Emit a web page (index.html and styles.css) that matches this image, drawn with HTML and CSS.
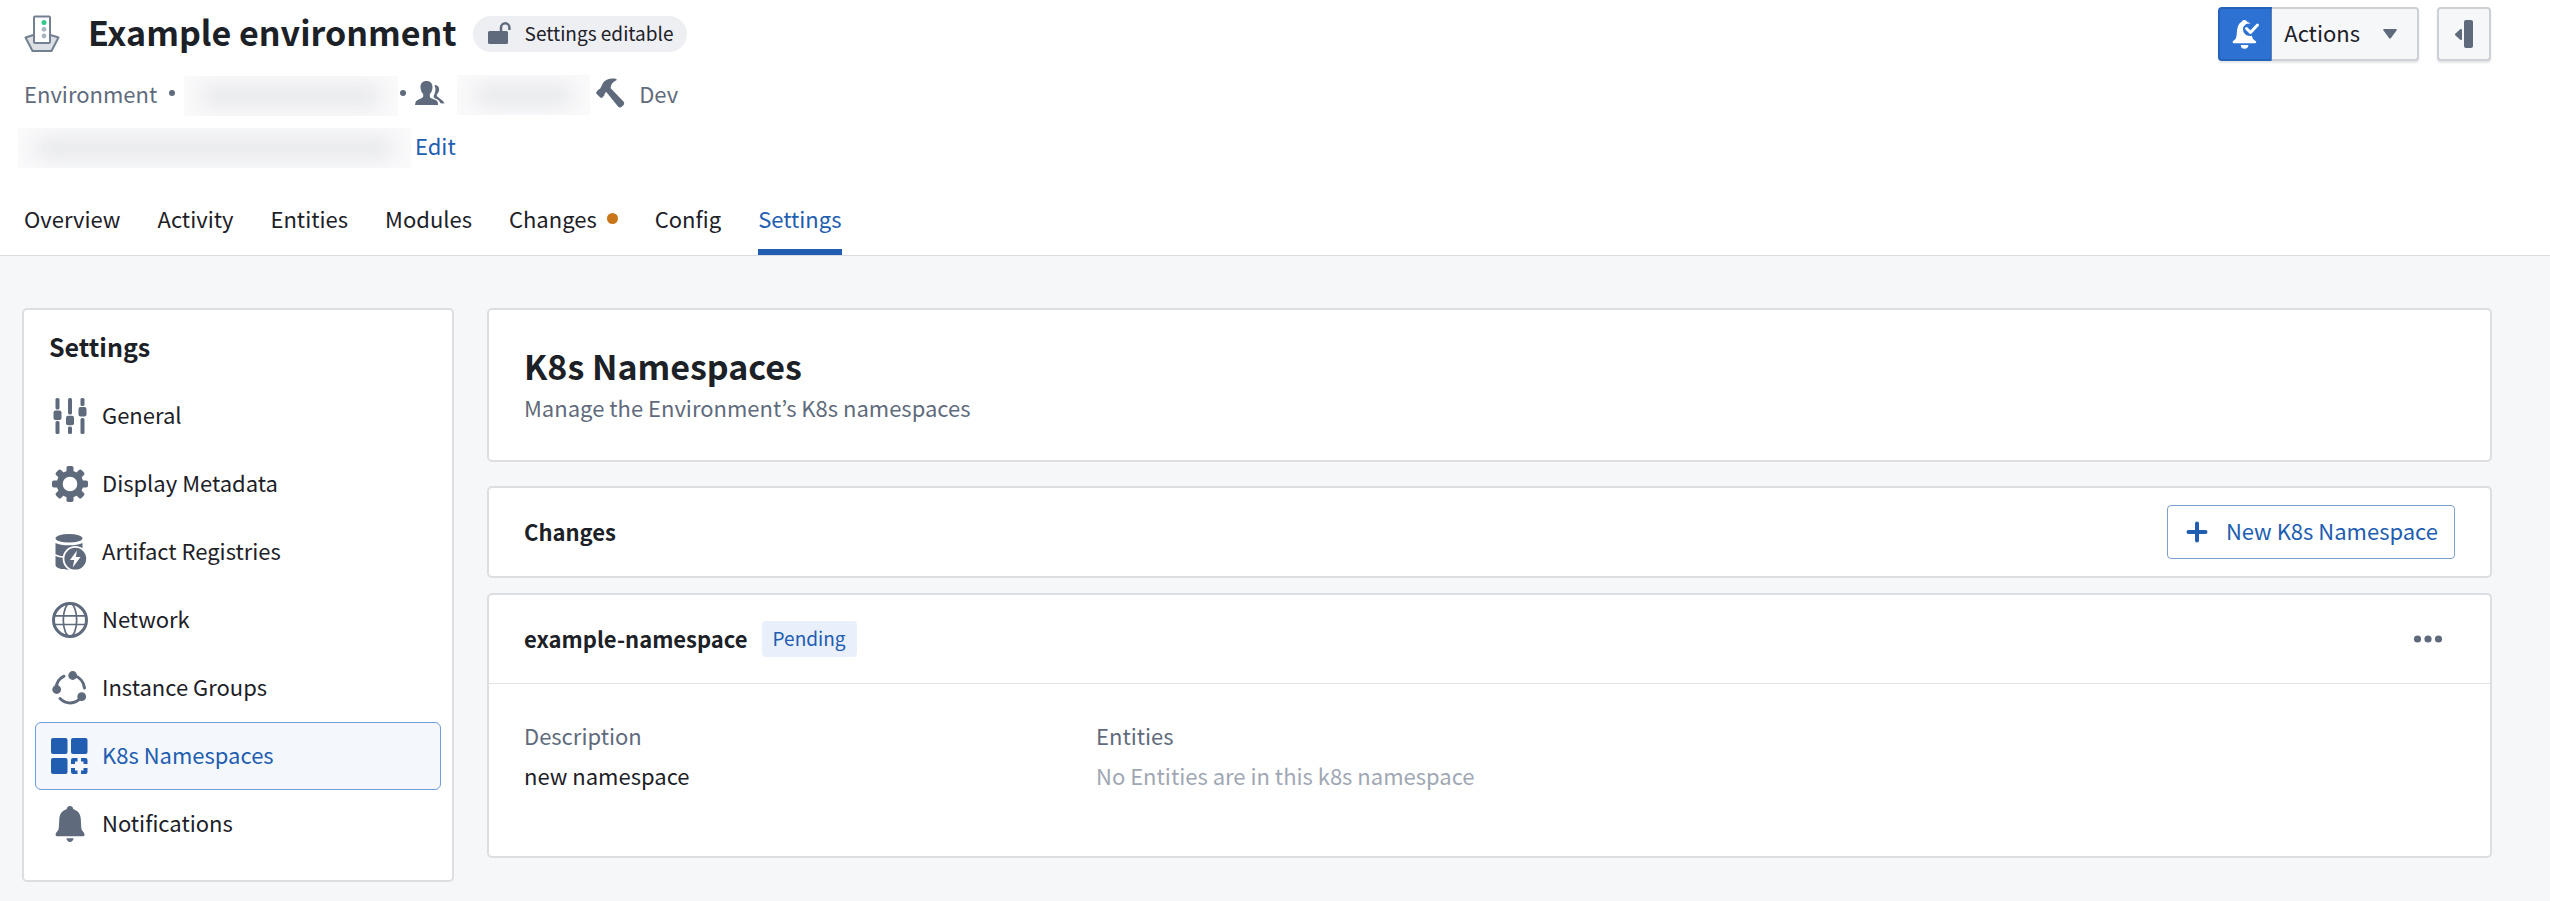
FILE: index.html
```html
<!DOCTYPE html>
<html lang="en">
<head>
<meta charset="utf-8">
<title>Example environment</title>
<link rel="stylesheet" href="styles.css">
</head>
<body>
<header class="header">
  <div class="header-top">
    <div class="title-row">
      <svg class="env-icon" viewBox="0 0 36 38" aria-hidden="true">
        <path d="M1.500 22.500 9.500 20h17l8 2.500-7 13.500h-19z" fill="#dce0e5" stroke="#738091" stroke-width="2" stroke-linejoin="round"/>
        <rect x="10" y="1.500" width="16" height="26.500" rx="1" fill="#fff" stroke="#738091" stroke-width="2"/>
        <circle cx="20" cy="7.500" r="2.500" fill="#32c98d"/><circle cx="20" cy="14.300" r="2.400" fill="#a7b6c2"/><circle cx="20" cy="21" r="2.400" fill="#a7b6c2"/>
      </svg>
      <h1 class="title">Example environment</h1>
      <span class="tag tag-round">
        <svg class="lock-icon" viewBox="0 0 24 24" aria-hidden="true"><rect x="1" y="10" width="20" height="13" rx="1.500"/><path d="M14 11V6.500a4.200 4.200 0 0 1 8.400 0V9" fill="none" stroke="currentColor" stroke-width="2.500"/></svg>
        Settings editable
      </span>
    </div>
    <div class="header-actions">
      <div class="split">
        <button class="split-main" aria-label="Watch">
          <svg class="icon-32" viewBox="0 0 32 32" aria-hidden="true"><path d="M15.500 2c1.300 0 2.200.8 2.500 1.800l2 .8 1.500 1.200-2.600-.3c-3.600 1-5.300 4-4.600 7.400.8 3.800 5 5.800 8.600 4.500.3 2.300 1.300 4.300 3.300 5.300 1.400.8 1.500 2.600-.2 2.600H5c-1.800 0-1.800-2-.3-2.700C8 20.800 7.500 17 8 13c.4-4 1.500-7.500 4.700-9.200C13.200 2.600 14 2 15.500 2z"/><g fill="none" stroke-linecap="round" stroke-linejoin="round"><path class="check-gap" d="m17.500 10.500 4 4L28.500 7" stroke-width="6.500"/><path d="m17.500 10.500 4 4L28.500 7" stroke="currentColor" stroke-width="3"/></g><path d="M11.800 27h7.500a3.700 3.700 0 0 1-7.500 0z"/></svg>
        </button>
        <button class="split-menu"><span class="lift">Actions</span><svg class="caret" viewBox="0 0 16 12" aria-hidden="true"><path d="M2 1h12c1 0 1 1 .5 1.500L9 10c-.6.8-1.400.8-2 0L1.500 2.500C1 2 1 1 2 1z"/></svg></button>
      </div>
      <button class="panel-toggle" aria-label="Open panel">
        <svg class="icon-32" viewBox="0 0 32 32" aria-hidden="true"><rect x="16" y="2" width="9" height="28" rx="2"/><path d="M14 12v9c0 1-1 1.400-1.800.8L7.500 17.500c-.7-.6-.7-1.400 0-2l4.700-4.300C13 10.600 14 11 14 12z"/></svg>
      </button>
    </div>
  </div>
  <div class="meta">
    <span>Environment</span>
    <span class="bullet"></span>
    <span class="redacted redacted-m"></span>
    <span class="bullet"></span>
    <svg class="icon-32 people" viewBox="0 0 32 32" aria-hidden="true"><path d="M12.500 4c-4 0-6.200 2.600-6 6.400.2 3 1.300 5.200 2.700 6.600v2.600c0 2-7 2.800-7.700 5.900L1 28h23c0-3-.5-4-2.500-4.900-2.500-1.200-5.700-1.700-5.700-3.500V17c1.400-1.400 2.500-3.600 2.700-6.600.2-3.800-2-6.400-6-6.400z"/><path d="M20.500 8c3 0 4.700 1.700 4.700 4.500 0 2.300-1.500 4-2.200 4.800-.4.600-.3 1.700.3 2.200L29 24l1.500 2.500-4-.3c-.6-1.600-1.800-3-3.500-3.900-2-1-3.600-1.200-3.300-2.800.2-2 1.600-3 1.800-7.500z"/></svg>
    <span class="redacted redacted-s"></span>
    <svg class="icon-32" viewBox="0 0 32 32" aria-hidden="true"><path d="M21.500 2c-6-1.300-11 .3-13.500 4L5.500 11c-.5 1.200-1.500 1-2.500 2l-1.500 2c-.6.8-.4 1.500.2 2l3.600 3.500c.7.7 1.500.6 2.100 0l1.600-1.700c.8-.8.3-2 1-2.800l1.300-1L23 29.500c1 1.200 2.600 1.300 3.800.3l1.600-1.600c1-1 1-2.500.1-3.700L15.700 11.300c0-3.300 1.500-6 5.800-8z"/></svg>
    <span>Dev</span>
  </div>
  <div class="about">
    <span class="redacted redacted-l"></span>
    <a class="link" href="#edit">Edit</a>
  </div>
  <nav class="tabs" aria-label="Environment">
    <a class="tab" href="#overview">Overview</a>
    <a class="tab" href="#activity">Activity</a>
    <a class="tab" href="#entities">Entities</a>
    <a class="tab" href="#modules">Modules</a>
    <a class="tab" href="#changes">Changes<span class="dot"></span></a>
    <a class="tab" href="#config">Config</a>
    <a class="tab active" href="#settings" aria-current="page">Settings</a>
  </nav>
</header>
<main class="page">
  <aside class="card sidebar">
    <h2 class="sidebar-title">Settings</h2>
    <nav class="side-nav" aria-label="Settings">
      <a class="side-item" href="#general"><svg class="icon-40" viewBox="0 0 40 40" aria-hidden="true"><rect x="5.500" y="2" width="4" height="11.500" rx="1.500"/><rect x="3.500" y="14.500" width="8" height="9.500" rx="2"/><rect x="5.500" y="25" width="4" height="13" rx="1.500"/><rect x="18" y="2" width="4" height="16.500" rx="1.500"/><rect x="16" y="19.700" width="8" height="9.500" rx="2"/><rect x="18" y="30.500" width="4" height="7.500" rx="1.500"/><rect x="30.500" y="2" width="4" height="8" rx="1.500"/><rect x="28.500" y="11" width="8" height="9.500" rx="2"/><rect x="30.500" y="22" width="4" height="16" rx="1.500"/></svg><span>General</span></a>
      <a class="side-item" href="#metadata"><svg class="icon-40" viewBox="0 0 40 40" aria-hidden="true"><circle cx="20" cy="20" r="10.300" fill="none" stroke="currentColor" stroke-width="6"/><g id="teeth"><rect x="16.500" y="2" width="7" height="8.500" rx="1.800"/><rect x="16.500" y="29.500" width="7" height="8.500" rx="1.800"/><rect x="2" y="16.500" width="8.500" height="7" rx="1.800"/><rect x="29.500" y="16.500" width="8.500" height="7" rx="1.800"/></g><use href="#teeth" transform="rotate(45 20 20)"/></svg><span>Display Metadata</span></a>
      <a class="side-item" href="#registries"><svg class="icon-40" viewBox="0 0 40 40" aria-hidden="true"><ellipse cx="19" cy="6.300" rx="13.500" ry="4.300"/><path d="M5.500 11c3 1.700 8 2.300 13.500 2.300s10.500-.6 13.500-2.300v22c0 3-6 4.700-13.500 4.700S5.500 36 5.500 33z"/><path d="M5 23c3 1.500 6 2 10 2.200" fill="none" stroke="#fff" stroke-width="1.600"/><circle cx="25.300" cy="26.700" r="11.800" stroke="#fff" stroke-width="1.800"/><path d="M27 18.500 20 28h4.300l-1.600 7.500L30.500 25h-4.700z" fill="#fff"/></svg><span>Artifact Registries</span></a>
      <a class="side-item" href="#network"><svg class="icon-40" viewBox="0 0 40 40" aria-hidden="true"><g fill="none" stroke="currentColor"><circle cx="20" cy="20" r="16.500" stroke-width="3"/><g stroke-width="1.700"><path d="M4 15.800h32M4 24.500h32"/><ellipse cx="20" cy="20" rx="6.700" ry="16.500"/></g></g></svg><span>Network</span></a>
      <a class="side-item" href="#instances"><svg class="icon-40" viewBox="0 0 40 40" aria-hidden="true"><circle cx="22.700" cy="7.500" r="4.400"/><circle cx="6.700" cy="21.500" r="4.400"/><circle cx="31.700" cy="28.700" r="4.400"/><g fill="none" stroke="currentColor" stroke-width="3" stroke-linecap="round"><path d="M14 8.200A14.500 14.500 0 0 0 6 21"/><path d="M24 7.500A14.500 14.500 0 0 1 34.500 20"/><path d="M10 30.500c6 6 15 6 20.500-.5"/></g></svg><span>Instance Groups</span></a>
      <a class="side-item selected" href="#namespaces" aria-current="page"><svg class="icon-40" viewBox="0 0 40 40" aria-hidden="true"><rect x="1" y="2" width="16.500" height="16" rx="2"/><rect x="21" y="2" width="16.500" height="16" rx="2"/><rect x="1" y="22" width="16.500" height="16" rx="2"/><path d="M23 22h4.500v3.500H25V28h-4v-4a2 2 0 0 1 2-2zM31 22h4.500a2 2 0 0 1 2 2v4h-4v-2.500H31zM21 32h4v2.500h2.500V38H23a2 2 0 0 1-2-2zM33.500 32h4v4a2 2 0 0 1-2 2H31v-3.500h2.500z"/></svg><span>K8s Namespaces</span></a>
      <a class="side-item" href="#notifications"><svg class="icon-40" viewBox="0 0 40 40" aria-hidden="true"><path d="M20 2c2 0 3.200 1.400 3.300 3.200C28 6.500 30.500 10 30.800 15c.3 5 .3 9 1 11l2.300 3c.8 1.500.4 3.300-1 3.300H7c-1.400 0-1.800-1.800-1-3.300l2.300-3c.7-2 .7-6 1-11 .3-5 2.700-8.500 7.400-9.800C16.800 3.400 18 2 20 2z"/><path d="M16.500 34.300h7c0 2-1.500 3.700-3.500 3.700s-3.500-1.700-3.500-3.700z"/></svg><span>Notifications</span></a>
    </nav>
  </aside>
  <div class="content">
    <section class="card intro">
      <h2 class="intro-title">K8s Namespaces</h2>
      <p class="muted">Manage the Environment’s K8s namespaces</p>
    </section>
    <section class="card bar">
      <h3 class="bar-title">Changes</h3>
      <button class="outline-button"><svg class="plus" viewBox="0 0 24 24" aria-hidden="true"><path d="M12 3.500v17M3.500 12h17" stroke="currentColor" stroke-width="4" stroke-linecap="round"/></svg><span class="lift">New K8s Namespace</span></button>
    </section>
    <section class="card namespace">
      <div class="bar namespace-head">
        <div class="name-group">
          <h3 class="bar-title">example-namespace</h3>
          <span class="tag tag-blue">Pending</span>
        </div>
        <button class="more" aria-label="More"><svg class="icon-32" viewBox="0 0 32 32" aria-hidden="true"><circle cx="5.500" cy="16" r="3.600"/><circle cx="16" cy="16" r="3.600"/><circle cx="26.500" cy="16" r="3.600"/></svg></button>
      </div>
      <dl class="details">
        <div><dt class="muted">Description</dt><dd>new namespace</dd></div>
        <div><dt class="muted">Entities</dt><dd class="empty">No Entities are in this k8s namespace</dd></div>
      </dl>
    </section>
  </div>
</main>
</body>
</html>
```

FILE: styles.css
```css
* { box-sizing: border-box; }
body {
  margin: 0;
  min-height: 100vh;
  background: #f6f7f9;
  color: #1c2127;
  font: 22px/36px "Noto Sans CJK KR", "Noto Sans", sans-serif;
}
h1, h2, h3, p, dl, dd { margin: 0; }
a { color: inherit; text-decoration: none; }
button { font: inherit; color: inherit; cursor: pointer; padding: 0; }
svg { flex: none; fill: currentColor; }
.icon-32 { width: 32px; height: 32px; color: #5f6b7c; }
.icon-40 { width: 40px; height: 40px; }
.lift { padding-bottom: 4px; }

.header { background: #fff; border-bottom: 1px solid #d8dbdf; padding: 7px 59px 0 24px; }
.header-top { display: flex; justify-content: space-between; align-items: flex-start; }
.title-row { display: flex; align-items: center; height: 54px; }
.env-icon { width: 36px; height: 38px; margin-right: 28px; }
.title { font-size: 34px; line-height: 50px; padding-bottom: 4px; margin-right: 16px; }
.tag { display: inline-flex; align-items: center; height: 36px; padding-bottom: 3px; font-size: 19px; }
.tag-round { gap: 14px; padding-left: 14px; padding-right: 14px; border-radius: 18px; background: #eeeff2; }
.lock-icon { width: 24px; height: 24px; color: #5f6b7c; }
.tag-blue { padding-left: 11px; padding-right: 11px; border-radius: 4px; background: #e9effb; color: #215db0; }

.header-actions { display: flex; gap: 18px; }
.split { display: flex; }
.split-main, .split-menu, .panel-toggle {
  display: flex; align-items: center; justify-content: center;
  height: 54px; border: 2px solid #cdd0d4; background: #f6f7f9;
  box-shadow: 0 2px 2px #e5e6e8;
}
.split-main { width: 54px; background: #2d72d2; border-color: #2461b8; border-radius: 4px 0 0 4px; }
.split-main .icon-32 { color: #fff; }
.check-gap { stroke: #2d72d2; }
.split-menu { gap: 22px; padding: 0 19px 0 12px; border-left: 0; border-radius: 0 4px 4px 0; }
.caret { width: 16px; height: 12px; color: #5f6b7c; }
.panel-toggle { width: 54px; border-radius: 4px; }

.meta, .about { display: flex; align-items: center; color: #5f6b7c; }
.meta { height: 42px; margin-top: 11px; gap: 12px; }
.bullet { width: 6px; height: 6px; border-radius: 50%; background: #5f6b7c; }
.people { margin-left: -4px; }
.redacted { height: 40px; background: #fafafb; overflow: hidden; padding: 8px 16px; }
.redacted::before { content: ""; display: block; height: 24px; border-radius: 12px; background: #e8e9ec; filter: blur(10px); }
.redacted-m { width: 214px; margin: 6px -10px 0 -3px; }
.redacted-s { width: 133px; margin: 4px -7px 0 -1px; }
.redacted-l { width: 393px; }
.about { height: 42px; margin: 13px 0 0 -6px; gap: 4px; }
.link { padding-bottom: 6px; color: #215db0; }

.tabs { display: flex; gap: 37px; margin-top: 18px; }
.tab { display: flex; align-items: center; height: 68px; padding-bottom: 6px; }
.tab.active { color: #215db0; box-shadow: inset 0 -6px #215db0; }
.dot { width: 11px; height: 11px; margin-left: 10px; border-radius: 50%; background: #c87619; }

.page { display: flex; align-items: flex-start; gap: 33px; padding: 52px 58px 20px 22px; }
.card { background: #fff; border: 2px solid #dcdee1; border-radius: 5px; }
.sidebar { width: 432px; flex: none; padding: 16px 11px 22px; }
.sidebar-title { font-size: 25px; line-height: 40px; padding: 0 14px; }
.side-nav { margin-top: 16px; }
.side-item { display: flex; align-items: center; gap: 12px; height: 68px; padding: 0 14px; border: 1px solid transparent; border-radius: 6px; }
.side-item .icon-40 { color: #5f6b7c; }
.side-item span { padding-bottom: 5px; }
.side-item.selected, .side-item.selected .icon-40 { color: #215db0; }
.side-item.selected { background: #f4f7fc; border-color: #6f9be0; }

.content { flex: 1; min-width: 0; }
.intro { padding: 33px 35px 35px; margin-bottom: 24px; }
.intro-title { font-size: 34px; line-height: 46px; }
.muted { color: #5f6b7c; }
.bar { display: flex; align-items: center; justify-content: space-between; height: 92px; padding: 0 35px; }
.bar-title { font-size: 22px; padding-bottom: 3px; }
.outline-button { display: flex; align-items: center; height: 54px; gap: 17px; padding: 0 16px 0 17px; border: 1px solid #7d9fd2; border-radius: 4px; background: #fff; color: #215db0; }
.plus { width: 24px; height: 24px; }
.namespace { margin-top: 15px; }
.namespace-head { height: 89px; border-bottom: 1px solid #e3e4e7; }
.name-group { display: flex; align-items: center; gap: 14px; }
.more { display: flex; align-items: center; padding: 0 11px; border: 0; background: none; }
.details { display: grid; grid-template-columns: 572px 1fr; padding: 31px 35px 61px; }
.details dt, .details dd { line-height: 40px; }
.empty { color: #a0a7b4; }
```
